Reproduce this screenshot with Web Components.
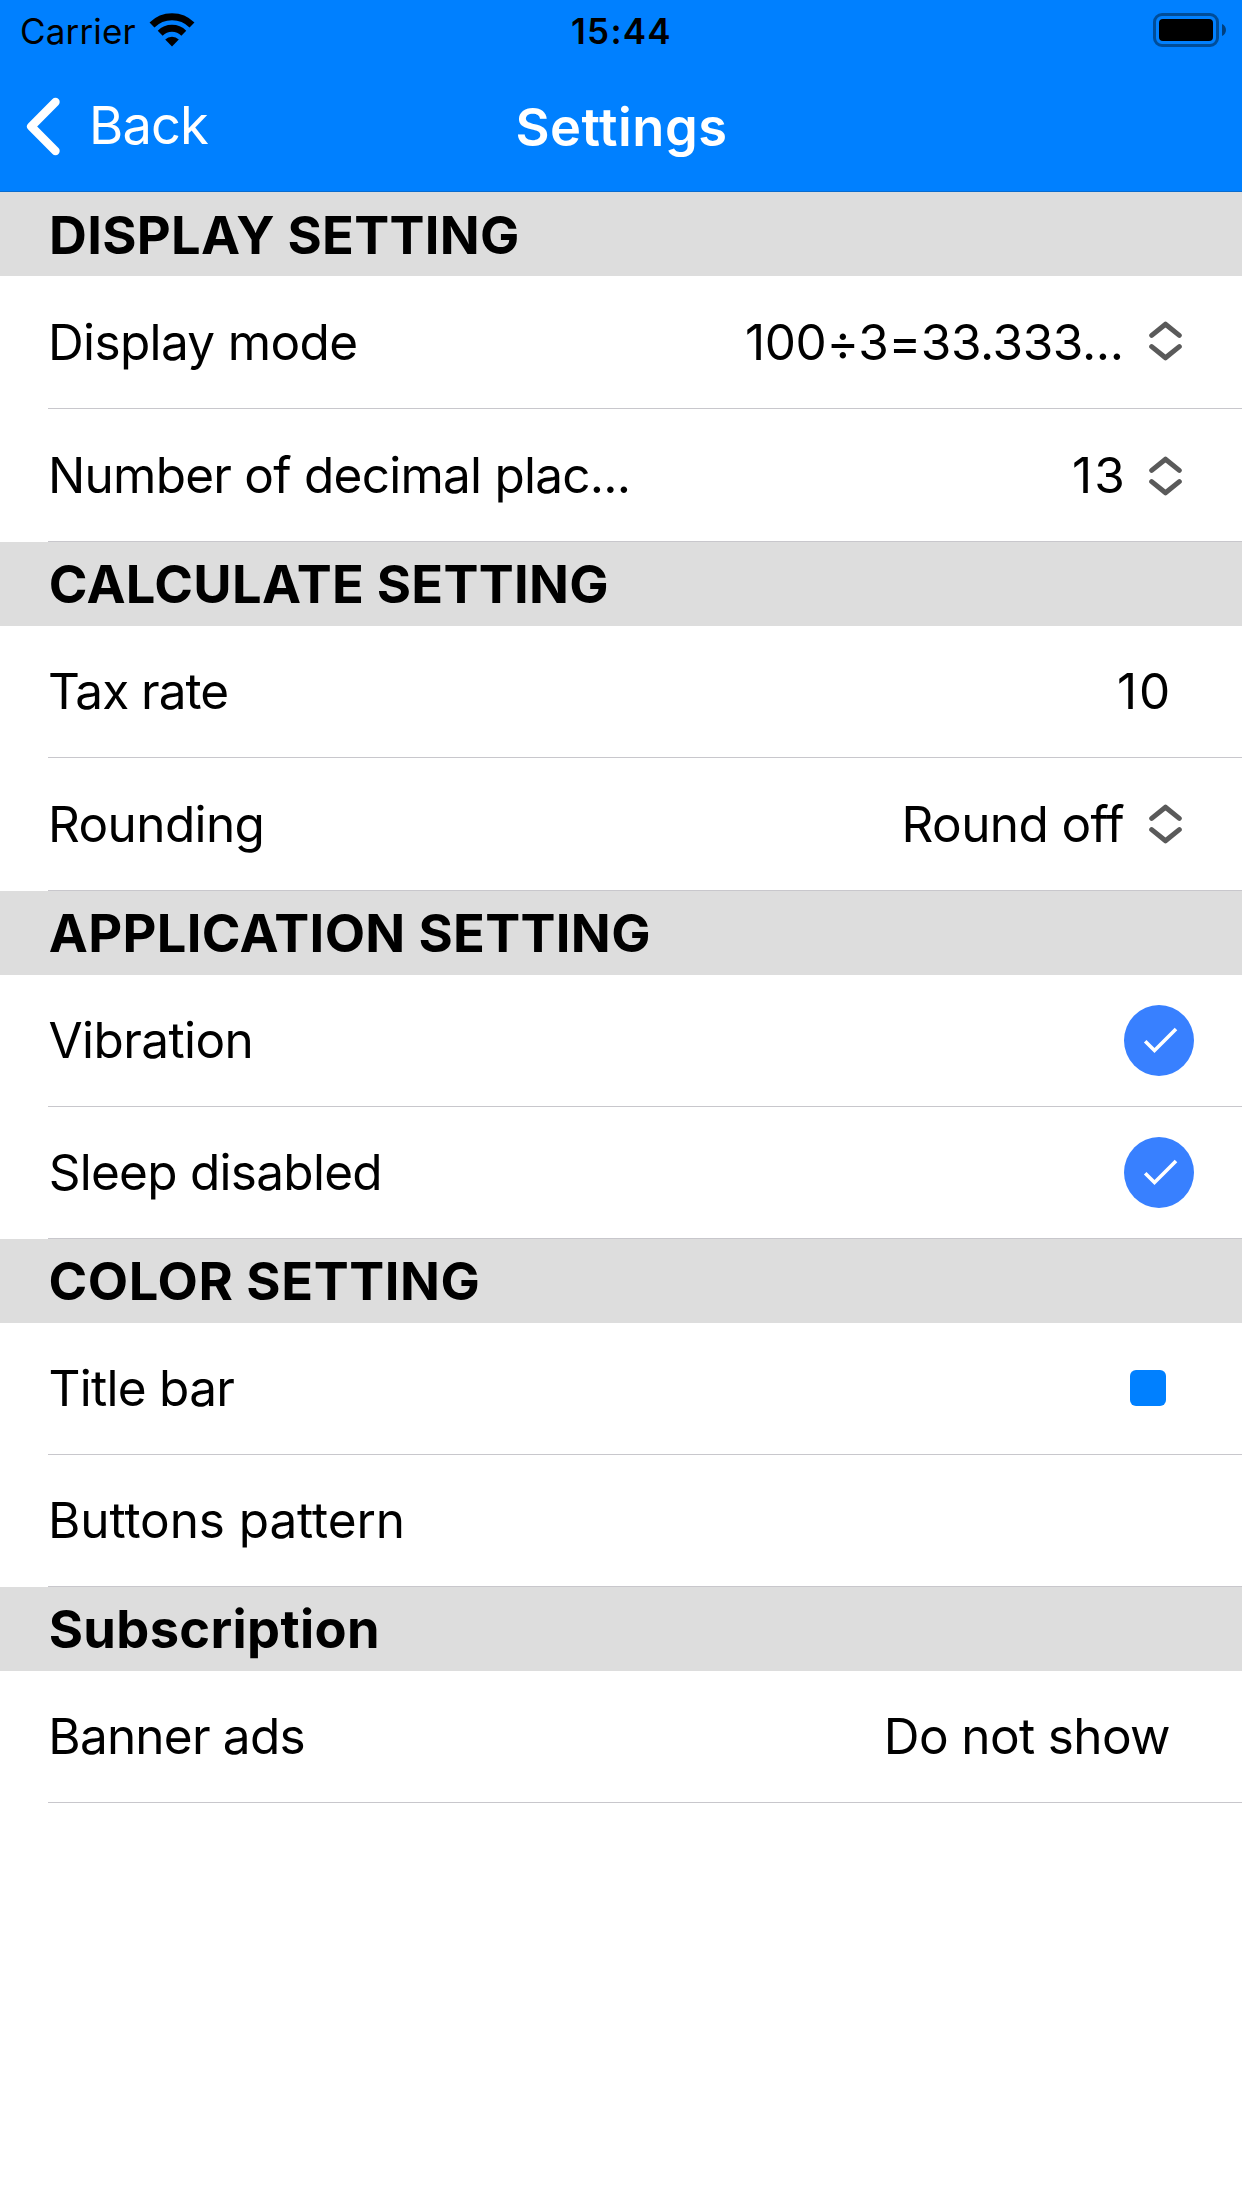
<!DOCTYPE html>
<html lang="en">
<head>
<meta charset="utf-8">
<title>Settings</title>
<style>
  html, body { margin: 0; background: #fff; }
  body { font-family: Inter, "Liberation Sans", sans-serif; color: #000; }
</style>
</head>
<body>
<settings-screen>
  <status-bar slot="top" carrier="Carrier" time="15:44"></status-bar>
  <nav-bar slot="top" back="Back">Settings</nav-bar>

  <settings-group label="DISPLAY SETTING" style="--head-track:.298px;--head-shift:1px;--head-line:86px">
    <settings-row label="Display mode" style="--h:133px;--track:-.645px;--drop:0px"><select-value style="--track:-.401px;--gap:25.5px;--lift:2px">100÷3=33.333...</select-value></settings-row>
    <settings-row label="Number of decimal plac..." style="--h:133px;--track:-.757px;--drop:0px"><select-value style="--track:2.1px;--gap:22px;--lift:-1px">13</select-value></settings-row>
  </settings-group>

  <settings-group label="CALCULATE SETTING" style="--head-track:.3px;--head-shift:.8px">
    <settings-row label="Tax rate" style="--track:-.987px"><text-value style="--track:1.866px;--end:70px">10</text-value></settings-row>
    <settings-row label="Rounding" style="--h:133px;--track:-.61px;--drop:0px"><select-value style="--track:-.616px;--gap:25px;--lift:0px">Round off</select-value></settings-row>
  </settings-group>

  <settings-group label="APPLICATION SETTING" style="--head-track:.34px;--head-shift:.8px">
    <settings-row label="Vibration" style="--track:-.593px;--shift:.5px"><check-value></check-value></settings-row>
    <settings-row label="Sleep disabled" style="--track:-.729px;--shift:.7px"><check-value></check-value></settings-row>
  </settings-group>

  <settings-group label="COLOR SETTING" style="--head-track:.57px;--head-shift:.5px">
    <settings-row label="Title bar" style="--track:-.724px;--shift:.5px"><color-value color="#0080ff"></color-value></settings-row>
    <settings-row label="Buttons pattern" style="--track:-.08px"></settings-row>
  </settings-group>

  <settings-group label="Subscription" style="--head-track:.339px;--head-shift:.7px">
    <settings-row label="Banner ads" style="--track:-.788px;--shift:.3px"><text-value style="--track:-.625px;--end:72px">Do not show</text-value></settings-row>
  </settings-group>
</settings-screen>

<script>
const define = (name, render) => customElements.define(name, class extends HTMLElement {
  connectedCallback() {
    if (this.shadowRoot) return;
    this.attachShadow({ mode: 'open' }).innerHTML = render(this);
  }
});

define('settings-screen', () => `
  <style>
    :host { display: flex; flex-direction: column; width: 1242px; height: 2208px; overflow: hidden; background: #fff; }
    header { display: flex; flex-direction: column; height: 191px; background: #0080ff; border-bottom: 1px solid #0a6cce; flex: none; }
    main { display: flex; flex-direction: column; }
  </style>
  <header><slot name="top"></slot></header>
  <main><slot></slot></main>`);

define('status-bar', el => `
  <style>
    :host { display: grid; grid-template-columns: 1fr auto 1fr; height: 60px; align-items: center; font-size: 35px; line-height: 42px; }
    .left { display: flex; align-items: center; padding-left: 20px; gap: 13px; }
    .left span { letter-spacing: .15px; }
    .left span, .time { padding-top: 1px; }
    .time { font-weight: 600; letter-spacing: 1.255px; padding-left: 1px; }
    .right { display: flex; justify-content: flex-end; padding-right: 16px; }
    svg { display: block; }
    .left svg { margin-bottom: 1px; }
  </style>
  <div class="left"><span>${el.getAttribute('carrier')}</span>
    <svg width="46" height="34" viewBox="0 0 46 34">
      <g fill="none" stroke="#000" stroke-width="7">
        <path d="M3 11.9a28.4 28.4 0 0 1 40 0"/>
        <path d="M11.2 20.2a16.8 16.8 0 0 1 23.6 0"/>
      </g>
      <path d="M23 33.4l-6.8-6.8a9.6 9.6 0 0 1 13.6 0z"/>
    </svg>
  </div>
  <span class="time">${el.getAttribute('time')}</span>
  <div class="right">
    <svg width="73" height="34" viewBox="0 0 73 34">
      <rect x="1.5" y="1.5" width="63" height="31" rx="7.5" fill="none" stroke="#000" stroke-opacity=".4" stroke-width="3"/>
      <rect x="6" y="6" width="54" height="22" rx="4"/>
      <path d="M69 11c5.3 2.2 5.3 9.8 0 12z" fill-opacity=".5"/>
    </svg>
  </div>`);

define('nav-bar', el => `
  <style>
    :host { display: grid; grid-template-columns: 1fr auto 1fr; height: 131px; align-items: center; color: #fff; font-size: 52.4px; line-height: 64px; }
    .back { display: flex; align-items: center; padding-left: 25px; gap: 29px; }
    .back span { letter-spacing: -.9px; padding-bottom: 1px; }
    .title { font-weight: 600; letter-spacing: .537px; padding: 2px 0 0 1px; }
    svg { display: block; margin-top: 1px; }
  </style>
  <div class="back">
    <svg width="35" height="59" viewBox="0 0 35 59"><path d="M30.5 5L6.2 29.5L30.5 54" fill="none" stroke="#fff" stroke-width="8.4" stroke-linecap="round" stroke-linejoin="round"/></svg>
    <span>${el.getAttribute('back')}</span>
  </div>
  <span class="title"><slot></slot></span>`);

define('settings-group', el => `
  <style>
    :host { display: flex; flex-direction: column; }
    h2 { margin: 0; height: 84px; line-height: var(--head-line, 84px); padding-left: calc(48px + var(--head-shift, 0px)); background: #ddd;
         font-size: 52.4px; font-weight: 700; letter-spacing: var(--head-track, 0); white-space: pre; }
  </style>
  <h2>${el.getAttribute('label')}</h2>
  <slot></slot>`);

define('settings-row', el => `
  <style>
    :host { display: flex; height: var(--h, 132px); padding-left: 48px; font-size: 49.5px; background: #fff; }
    .line { flex: 1; display: flex; align-items: center; justify-content: space-between; border-bottom: 1px solid #c8c7cc; }
    .label { letter-spacing: var(--track, 0); padding-left: var(--shift, 0px); padding-bottom: var(--drop, 2px); line-height: 60px; white-space: pre; }
  </style>
  <div class="line"><span class="label">${el.getAttribute('label')}</span><slot></slot></div>`);

define('text-value', () => `
  <style>
    :host { display: block; margin-right: var(--end); padding-bottom: 2px; line-height: 60px; }
    span { display: block; letter-spacing: var(--track, 0); white-space: nowrap; }
  </style>
  <span><slot></slot></span>`);

define('select-value', () => `
  <style>
    :host { display: flex; align-items: center; gap: var(--gap); margin-right: 60px; line-height: 60px; }
    span { letter-spacing: var(--track, 0); white-space: nowrap; }
    svg { display: block; margin-bottom: var(--lift, 0px); }
  </style>
  <span><slot></slot></span>
  <svg width="33" height="40" viewBox="0 0 33 40"><path d="M2.7 14.4L16.5 3.2L30.3 14.4M2.7 25.6L16.5 36.8L30.3 25.6" fill="none" stroke="#5a5a5a" stroke-width="5" stroke-linecap="round" stroke-linejoin="round"/></svg>`);

define('check-value', () => `
  <style>:host { display: block; margin-right: 48px; } svg { display: block; }</style>
  <svg width="70" height="71" viewBox="0 0 70 71"><ellipse cx="35" cy="35.5" rx="35" ry="35.5" fill="#3880ff"/><path d="M21.2 36.2L30.5 45.5L52 24" fill="none" stroke="#fff" stroke-width="3.6"/></svg>`);

define('color-value', el => `
  <style>:host { display: block; margin: 0 76px 1px 0; width: 36px; height: 36px; border-radius: 6px; background: ${el.getAttribute('color')}; }</style>`);
</script>
</body>
</html>
